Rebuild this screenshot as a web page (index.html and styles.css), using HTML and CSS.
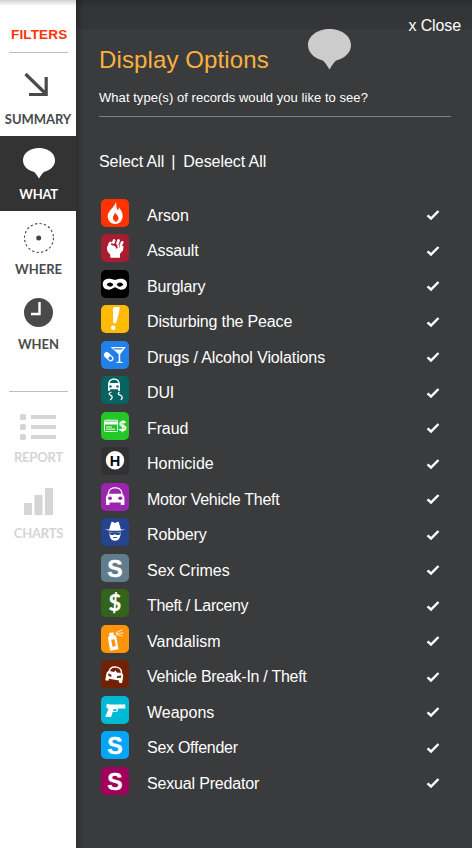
FILE: index.html
```html
<!DOCTYPE html>
<html lang="en">
<head>
<meta charset="utf-8">
<title>Display Options</title>
<link rel="stylesheet" href="styles.css">
</head>
<body>
<div class="app">
<nav class="sidebar">
  <div class="filters">FILTERS</div>
  <div class="rule"></div>
  <a class="item summary"><svg viewBox="0 0 76 54"><path d="M25.500 13 46 33M29 33.500H46.200V16" fill="none" stroke="#4a4a4a" stroke-width="3.200"/></svg><span>SUMMARY</span></a>
  <a class="item active what"><svg viewBox="0 0 76 54"><path d="M39 12c9 0 16 5.200 16 12.200 0 6-4.500 9.800-10.500 11.500-2 .8-3.800 4-5.500 6.800-1.700-2.800-3.500-6-5.500-6.800C27.500 34 23 30.200 23 24.200 23 17.200 30 12 39 12z" fill="#fff"/></svg><span>WHAT</span></a>
  <a class="item where"><svg viewBox="0 0 76 54"><circle cx="39" cy="27" r="14.500" fill="none" stroke="#444" stroke-width="1.100" stroke-dasharray="2.300 2.255"/><circle cx="38.700" cy="27" r="2.500" fill="#444"/></svg><span>WHERE</span></a>
  <a class="item when"><svg viewBox="0 0 76 54"><circle cx="38.500" cy="26.500" r="14.500" fill="#4a4a4a"/><path d="M39.500 16v12H31" fill="none" stroke="#fff" stroke-width="2.400"/></svg><span>WHEN</span></a>
  <div class="rule lower"></div>
  <a class="item muted report"><svg viewBox="0 0 76 54"><g fill="#d5d5d5"><rect x="20" y="15" width="6" height="6" rx="1.500"/><rect x="20" y="25" width="6" height="6" rx="1.500"/><rect x="20" y="35" width="6" height="6" rx="1.500"/><path d="M31 16h25v4H31zM31 26h25v4H31zM31 36h25v4H31z"/></g></svg><span>REPORT</span></a>
  <a class="item muted charts"><svg viewBox="0 0 76 54"><path d="M24 28h8v12h-8zM34.500 20h8v20h-8zM45 13h8v27h-8z" fill="#d5d5d5"/></svg><span>CHARTS</span></a>
</nav>
<main class="panel">
  <div class="topbar"><a class="close">x Close</a></div>
  <header class="heading">
    <h1>Display Options</h1>
    <svg class="balloon" viewBox="0 0 44 42"><path d="M21.500 0c12 0 21.500 7 21.500 16 0 7.500-6 13-14 15.300-3 1.200-5 5.500-7.500 9.200-2.500-3.700-4.500-8-7.500-9.200C6 29 0 23.500 0 16 0 7 9.500 0 21.500 0z" fill="#ccc"/></svg>
  </header>
  <p class="question">What type(s) of records would you like to see?</p>
  <div class="select"><a>Select All</a><i>|</i><a>Deselect All</a></div>
  <ul class="types">
    <li><svg class="badge" viewBox="0 0 28 28"><rect width="28" height="28" rx="5" fill="#ff3300"/><path d="M15 3c.8 4-.2 5.500 1.800 8.200.7-.5 1-1.500.9-3 2.500 3 4.300 6 3.900 9.300-.4 4.500-3.200 7.500-7.300 7.500-4.500 0-7.600-3.200-7.600-7.700C6.700 11.500 13.500 8.500 15 3z" fill="#fff"/><path d="M14 13.500c-.7 2.500-2.300 3.500-2.100 5.600.2 1.700 1.300 3 2.900 3.900 1.700-.7 2.700-2.100 2.700-3.900 0-2.500-2.300-3.400-3.500-5.600z" fill="#ff3300"/></svg><span>Arson</span><svg class="tick" viewBox="0 0 14 12"><path d="M1.500 6.300 5 9.500 12.500 2"/></svg></li>
    <li><svg class="badge" viewBox="0 0 28 28"><rect width="28" height="28" rx="5" fill="#a81e30"/><path d="M6 13.500c.4-2 1.400-3 3-2.800l5 1.300 1.500 2.500 1-1.500-.8-2.500 4.800.5 2 1.500-.5 4-3 3.200v4.100H9.300v-3.300C7 19 5.700 16.500 6 13.500z" fill="#fff"/><g fill="none" stroke="#fff" stroke-width="2.700" stroke-linecap="round"><path d="m8.500 10.500 1-1.700M12.300 8.500l.8-2M16.400 9.500l1.200-3M20 10.500l1.200-2.200"/></g><path d="m13.200 10 2.800 1.200-.8 3 1.800-.7M18 13.500l1-3" fill="none" stroke="#a81e30" stroke-width=".7"/></svg><span class="t1">Assault</span><svg class="tick" viewBox="0 0 14 12"><path d="M1.500 6.300 5 9.500 12.500 2"/></svg></li>
    <li><svg class="badge" viewBox="0 0 28 28"><rect width="28" height="28" rx="5" fill="#000"/><path d="M14 10c2.500-.8 4.500-1.500 7-1.200 3.500.5 5.200 2.700 5 5.800-.3 3.500-2.800 5.200-6 5.200-3 0-4-2.500-6-2.500s-3 2.500-6 2.500c-3.500 0-6-1.800-6.200-5.200-.2-3.200 1.700-5.400 5-5.800 2.500-.3 4.700.4 7.200 1.200z" fill="#fff"/><path d="M5.700 14.500c1.500-3 5.500-2.700 6.600.3-1.500 2.500-5 2.500-6.600-.3zM22.300 14.500c-1.500-3-5.500-2.700-6.600.3 1.500 2.500 5 2.500 6.600-.3z"/></svg><span class="t2">Burglary</span><svg class="tick" viewBox="0 0 14 12"><path d="M1.500 6.300 5 9.500 12.500 2"/></svg></li>
    <li><svg class="badge" viewBox="0 0 28 28"><rect width="28" height="28" rx="5" fill="#fdbb05"/><path d="M11.900 4c.1-1.300.9-2 2-2h3.500c1 0 1.600.6 1.400 1.600l-3.300 13.600c-.4 1.600-3.200 1.600-3.400 0z" fill="#fff"/><circle cx="12.200" cy="22.700" r="2.300" fill="#fff"/></svg><span class="t2">Disturbing the Peace</span><svg class="tick" viewBox="0 0 14 12"><path d="M1.500 6.300 5 9.500 12.500 2"/></svg></li>
    <li><svg class="badge" viewBox="0 0 28 28"><rect width="28" height="28" rx="5" fill="#2380e8"/><path d="M9.500 6h15.200l-5.500 7.300v6.900l3.300 1.800h-8l3.200-1.800v-6.900z" fill="#fff"/><path d="M12.300 7.300h9.600l-.9 1.200h-7.800z" fill="#2380e8"/><g transform="rotate(43 7.700 15.700)"><rect x="2.200" y="12.900" width="11" height="5.600" rx="2.800" fill="#fff"/><path d="M8.300 14.100h2a1.600 1.600 0 0 1 0 3.200h-2z" fill="#2380e8"/></g></svg><span class="t1">Drugs / Alcohol Violations</span><svg class="tick" viewBox="0 0 14 12"><path d="M1.500 6.300 5 9.500 12.500 2"/></svg></li>
    <li><svg class="badge" viewBox="0 0 28 28"><rect width="28" height="28" rx="5" fill="#066361"/><path d="M7 8.500C7.300 4.700 9.500 2.600 13 2.600s5.700 2.100 6 5.900v6.200h-2v-1.500H9v1.500H7z" fill="#fff"/><path d="M8.700 7c.6-2 2-3.200 4.300-3.200S16.700 5 17.300 7z" fill="#066361"/><path d="M8.300 9.500h2.400v2H8.300zM15.300 9.500h2.400v2h-2.400z" fill="#066361"/><path d="M10.500 16c-3 1-3 2.200-.7 3.300 2.600 1.200 1.200 3-.6 4.600M18.500 16c-2 1.300-1.500 2.200.7 3.200 2.700 1.200 2.500 2.700.7 4.600" fill="none" stroke="#fff" stroke-width="1.300"/></svg><span class="t1">DUI</span><svg class="tick" viewBox="0 0 14 12"><path d="M1.500 6.300 5 9.500 12.500 2"/></svg></li>
    <li><svg class="badge" viewBox="0 0 28 28"><rect width="28" height="28" rx="5" fill="#25c728"/><rect x="3.500" y="8.200" width="13.200" height="11.300" rx="1" fill="none" stroke="#fff"/><path d="M3.500 9.500h13.500v3H3.500z" fill="#fff"/><path d="M5 15h6M5 17.200h9" stroke="#fff"/><rect x="17.200" y="6" width="3" height="15" fill="#25c728"/><text x="21.500" y="19" text-anchor="middle" class="money small">$</text></svg><span class="t1">Fraud</span><svg class="tick" viewBox="0 0 14 12"><path d="M1.500 6.300 5 9.500 12.500 2"/></svg></li>
    <li><svg class="badge" viewBox="0 0 28 28"><rect width="28" height="28" rx="5" fill="#313134"/><circle cx="14" cy="13.300" r="9.200" fill="#fff"/><text x="14" y="18.500" text-anchor="middle" class="mark">H</text></svg><span>Homicide</span><svg class="tick" viewBox="0 0 14 12"><path d="M1.500 6.300 5 9.500 12.500 2"/></svg></li>
    <li><svg class="badge" viewBox="0 0 28 28"><rect width="28" height="28" rx="5" fill="#9b25ae"/><path d="M5 15c0-2 .8-2.800 1.600-3.500C7 7 9 4.300 14.100 4.300s7.200 2.700 7.600 7.200c.8.700 1.700 1.500 1.700 3.500v7h-3.600v-2.500H8.500V22H5z" fill="#fff"/><path d="M8 10.800c.4-3.600 2-5.200 6.100-5.200s5.800 1.600 6.200 5.200z" fill="#9b25ae"/><ellipse cx="9" cy="15.200" rx="2" ry="1.700" fill="#9b25ae"/><ellipse cx="19.300" cy="15.200" rx="2" ry="1.700" fill="#9b25ae"/></svg><span class="t3">Motor Vehicle Theft</span><svg class="tick" viewBox="0 0 14 12"><path d="M1.500 6.300 5 9.500 12.500 2"/></svg></li>
    <li><svg class="badge" viewBox="0 0 28 28"><rect width="28" height="28" rx="5" fill="#254490"/><path d="M3.700 11.500h4.500L10 5.200c.5-2 1.800-1.700 2.500-.9.900 1 2.200 1 3 0 .8-.9 2.100-1.100 2.600.9l1.800 6.300h4.600c-4.500 1.700-16.800 1.700-20.800 0z" fill="#fff"/><path d="m8.300 13.700 4.600 1h2.200l4.600-1c.1 5.700-2 9-5.700 9s-5.800-3.300-5.700-9z" fill="#fff"/><path d="M8.200 14.500h5.300l.5.700.5-.7h5.300c-.4 2-1.300 2.500-3 2.500-1.500 0-2.200-.4-2.800-1-.6.600-1.300 1-2.800 1-1.700 0-2.600-.5-3-2.500z" fill="#254490"/><path d="M12 19.500h4" stroke="#254490" stroke-width=".9"/></svg><span class="t1">Robbery</span><svg class="tick" viewBox="0 0 14 12"><path d="M1.500 6.300 5 9.500 12.500 2"/></svg></li>
    <li><svg class="badge" viewBox="0 0 28 28"><rect width="28" height="28" rx="5" fill="#607d8b"/><text x="14" y="22.500" text-anchor="middle" class="letter">S</text></svg><span>Sex Crimes</span><svg class="tick" viewBox="0 0 14 12"><path d="M1.500 6.300 5 9.500 12.500 2"/></svg></li>
    <li><svg class="badge" viewBox="0 0 28 28"><rect width="28" height="28" rx="5" fill="#33641b"/><text x="14" y="21.500" text-anchor="middle" class="money">$</text></svg><span class="t4">Theft / Larceny</span><svg class="tick" viewBox="0 0 14 12"><path d="M1.500 6.300 5 9.500 12.500 2"/></svg></li>
    <li><svg class="badge" viewBox="0 0 28 28"><rect width="28" height="28" rx="5" fill="#ff9409"/><g transform="rotate(-10 12 16)"><path d="M9.500 7.500h4.300v2.600c1.600.6 2.200 1.500 2.200 3v12H7.500v-12c0-1.500.5-2.400 2-3z" fill="#fff"/><path d="M10.500 14.500h3.300v7h-3.300z" fill="#ff9409"/></g><path d="m14.500 8.200 7-3.700M15 9l7.500-1.200M15.300 9.800l6.500 1.200" stroke="#fff" stroke-width=".8"/></svg><span>Vandalism</span><svg class="tick" viewBox="0 0 14 12"><path d="M1.500 6.300 5 9.500 12.500 2"/></svg></li>
    <li><svg class="badge" viewBox="0 0 28 28"><rect width="28" height="28" rx="5" fill="#722204"/><g transform="rotate(10 14 14)"><path d="M5.500 15.500c0-1.800.7-2.600 1.500-3.200C7.600 8.300 9.500 6.300 14 6.300s6.500 2 7 6c.8.600 1.500 1.400 1.500 3.200v6.300h-3.300v-2H8.800v2H5.500z" fill="#fff"/><path d="M8.500 12c.6-3 2-4.300 5.500-4.300s5 1.300 5.500 4.300l-4 .3-1.500-2-1.300 2z" fill="#722204"/><path d="m7.500 14.500 3.300 1v2l-3.300-.8zM20.500 14.500l-4 1v2l4-.8z" fill="#722204"/></g></svg><span class="t3">Vehicle Break-In / Theft</span><svg class="tick" viewBox="0 0 14 12"><path d="M1.500 6.300 5 9.500 12.500 2"/></svg></li>
    <li><svg class="badge" viewBox="0 0 28 28"><rect width="28" height="28" rx="5" fill="#00bad3"/><path d="M5.500 8.500 7 7.800l1.500.6h14.700l.8-.5.5 4.600H17c.3 2.500-.8 3.800-3.300 3.600h-2l-1.400 4.500c-.2.800-5.300.7-6-.4L7.500 13l-2-1.300z" fill="#fff"/><path d="M12.500 13.200h3.300c.1 1.200-.4 1.900-1.600 1.900h-2.100z" fill="#00bad3"/></svg><span>Weapons</span><svg class="tick" viewBox="0 0 14 12"><path d="M1.500 6.300 5 9.500 12.500 2"/></svg></li>
    <li><svg class="badge" viewBox="0 0 28 28"><rect width="28" height="28" rx="5" fill="#03a5f6"/><text x="14" y="22.500" text-anchor="middle" class="letter">S</text></svg><span class="t3">Sex Offender</span><svg class="tick" viewBox="0 0 14 12"><path d="M1.500 6.300 5 9.500 12.500 2"/></svg></li>
    <li><svg class="badge" viewBox="0 0 28 28"><rect width="28" height="28" rx="5" fill="#a0005c"/><text x="14" y="22.500" text-anchor="middle" class="letter">S</text></svg><span class="t2">Sexual Predator</span><svg class="tick" viewBox="0 0 14 12"><path d="M1.500 6.300 5 9.500 12.500 2"/></svg></li>
  </ul>
</main>
</div>
</body>
</html>
```
FILE: styles.css
```css
* { box-sizing: border-box; }
body { margin: 0; font-family: "Liberation Sans", Arial, sans-serif; }
.app { display: flex; width: 472px; height: 848px; overflow: hidden; }

.sidebar {
  width: 76px;
  flex: none;
  background: linear-gradient(#d0d0d0, #fff 6px);
}
.filters {
  height: 52px;
  padding: 26px 0 0 11px;
  color: #ff3300;
  font-size: 13.500px;
  line-height: 17px;
  font-weight: bold;
  letter-spacing: .15px;
}
.rule { height: 1px; width: 59px; margin-left: 9px; background: #bdbdbd; }
.rule.lower { margin-top: 30px; margin-bottom: 7px; }
.item {
  display: flex;
  flex-direction: column;
  align-items: center;
  height: 75px;
  color: #4a4a4a;
  font: bold 13px/13px Lato, sans-serif;
  white-space: nowrap;
}
.item svg { width: 76px; height: 54px; flex: none; display: block; margin-bottom: -2px; }
.item span { margin-left: 1px; }
.summary { margin-top: 8px; }
.summary span { margin-left: 0; letter-spacing: -.05px; }
.what span { letter-spacing: -.3px; }
.active { background: #333; color: #fff; }
.muted { color: #d5d5d5; }
.report { margin-bottom: 1px; }
.report span { letter-spacing: -.2px; }
.charts span { letter-spacing: -.2px; }

.panel {
  flex: 1;
  min-width: 0;
  color: #fff;
  background: linear-gradient(90deg, #2d2e2f, #343536 4px, #3a3b3c 8px);
}
.topbar {
  height: 29px;
  padding: 17px 11px 0 0;
  text-align: right;
  font-size: 16px;
  line-height: 18px;
  background: linear-gradient(rgba(0, 0, 0, .25), rgba(0, 0, 0, .1) 8px);
}
.close { letter-spacing: -.12px; }
.heading { display: flex; height: 58px; padding-left: 23px; }
h1 {
  margin: 16px 0 0;
  width: 209px;
  color: #fbb040;
  font-size: 24px;
  line-height: 30px;
  font-weight: normal;
  letter-spacing: .12px;
  white-space: nowrap;
}
.balloon { width: 44px; height: 42px; }
.question {
  width: 352px;
  height: 30px;
  margin: 0 0 0 23px;
  padding-top: 3px;
  border-bottom: 1px solid #7f8080;
  font-size: 13px;
  line-height: 15px;
  letter-spacing: .05px;
}
.select { display: flex; padding: 36px 0 0 23px; font-size: 16px; line-height: 18px; letter-spacing: -.06px; }
.select i { font-style: normal; margin: 0 8px 0 7px; }
.types { margin: 27.800px 0 0; padding: 0; list-style: none; }
.types li { display: flex; height: 35.500px; padding-left: 25px; }
.badge { width: 28px; height: 28px; margin-right: 18px; flex: none; }
.types span { width: 279px; padding-top: 8px; font-size: 16px; line-height: 18px; }
.types .t1 { letter-spacing: -.12px; }
.types .t2 { letter-spacing: -.17px; }
.types .t3 { letter-spacing: -.27px; }
.types .t4 { letter-spacing: -.37px; }
.tick { width: 14px; height: 12px; margin-top: 10.300px; fill: none; stroke: #fff; stroke-width: 2.400; }
.letter { font: bold 23px "Liberation Sans", sans-serif; fill: #fff; stroke: #fff; stroke-width: .4px; }
.mark { font: bold 14.500px "Liberation Sans", sans-serif; fill: #000; }
.money { font: 900 22px Lato, sans-serif; fill: #fff; }
.money.small { font-size: 14px; }
```
